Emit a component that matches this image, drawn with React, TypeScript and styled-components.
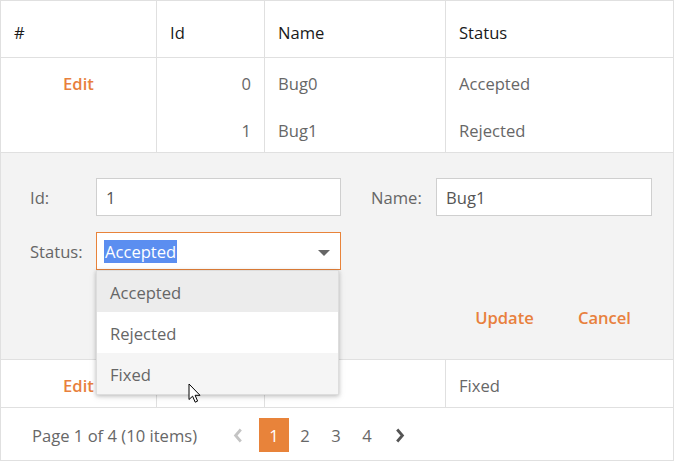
import React from "react";
import styled, { createGlobalStyle } from "styled-components";

const Global = createGlobalStyle`
  html, body { margin: 0; padding: 0; background: #fff; }
  body { font-family: "Open Sans", "Noto Sans", sans-serif; font-size: 16.6px; color: #333; }
  * { box-sizing: border-box; }
`;

const ORANGE = "#e8803d";
const BORDER = "#e0e0e0";
const FS = "16.6px";

const Frame = styled.div`
  position: relative;
  width: 674px;
  height: 461px;
  border: 1px solid ${BORDER};
  display: flex;
  flex-direction: column;
`;

const Row = styled.div<{ $h: number; $border?: boolean }>`
  display: grid;
  grid-template-columns: 156px 108px 181px 1fr;
  height: ${(p) => p.$h}px;
  border-bottom: ${(p) => (p.$border ? `1px solid ${BORDER}` : "none")};
`;

const Cell = styled.div<{ $align?: string; $last?: boolean; $head?: boolean }>`
  display: flex;
  align-items: center;
  justify-content: ${(p) => p.$align || "flex-start"};
  padding: ${(p) => (p.$head ? "6px 13px 0 13px" : "3px 13px 0 13px")};
  border-right: ${(p) => (p.$last ? "none" : `1px solid ${BORDER}`)};
  color: ${(p) => (p.$head ? "#1a1a1a" : "#676767")};
  font-size: ${FS};
  white-space: nowrap;
`;

const EditLink = styled.span`
  color: ${ORANGE};
  font-weight: 600;
`;

const FormRow = styled.div`
  height: 207px;
  background: #f3f3f3;
  border-bottom: 1px solid ${BORDER};
  padding: 25px 20px 0 29px;
  display: flex;
  flex-direction: column;
`;

const FieldGrid = styled.div`
  display: grid;
  grid-template-columns: 311px 281px;
  column-gap: 30px;
  row-gap: 16px;
`;

const Field = styled.div<{ $labelW: number }>`
  display: grid;
  grid-template-columns: ${(p) => p.$labelW}px 1fr;
  align-items: center;
  position: relative;
`;

const Label = styled.span`
  color: #666;
  font-size: ${FS};
  padding-top: 1px;
`;

const Input = styled.div<{ $focus?: boolean }>`
  height: 38px;
  background: #fff;
  border: 1px solid ${(p) => (p.$focus ? "#e8833a" : "#cfcfcf")};
  display: flex;
  align-items: center;
  padding: 1px 9px 0 9px;
  color: #555;
  font-size: ${FS};
  position: relative;
`;

const Selected = styled.span`
  background: #5b8ef0;
  color: #fff;
  margin-left: -2px;
  padding: 0 1px;
  line-height: 23px;
`;

const Caret = styled.span`
  position: absolute;
  right: 10px;
  top: 17px;
  width: 0;
  height: 0;
  border-left: 6px solid transparent;
  border-right: 6px solid transparent;
  border-top: 6px solid #666;
`;

const Buttons = styled.div`
  display: flex;
  justify-content: flex-end;
  gap: 4px;
  margin: 30px 2px 0 0;
`;

const TextButton = styled.span`
  color: ${ORANGE};
  font-weight: 600;
  font-size: ${FS};
  padding: 6px 20px;
`;

const Dropdown = styled.div`
  position: absolute;
  left: 66px;
  top: 38px;
  width: 243px;
  background: #fff;
  box-shadow: 0 1px 4px rgba(0, 0, 0, 0.22), 0 2px 8px rgba(0, 0, 0, 0.08);
  border: 1px solid #ddd;
  z-index: 5;
  display: flex;
  flex-direction: column;
`;

const Item = styled.div<{ $bg?: string }>`
  height: 41px;
  display: flex;
  align-items: center;
  padding: 2px 13px 0 13px;
  background: ${(p) => p.$bg || "#fff"};
  color: #666;
  font-size: ${FS};
`;

const Cursor = styled.svg`
  position: absolute;
  left: 158px;
  top: 151px;
  z-index: 6;
`;

const Pager = styled.div`
  flex: 1;
  display: flex;
  align-items: center;
  padding: 2px 0 0 31px;
  color: #676767;
  font-size: ${FS};
`;

const PagerInfo = styled.span`
  margin-right: 29px;
`;

const Pages = styled.div`
  display: flex;
  align-items: center;
  gap: 1px;
`;

const Nav = styled.span<{ $dim?: boolean; $side: "l" | "r" }>`
  width: 24px;
  display: flex;
  justify-content: center;
  margin: ${(p) => (p.$side === "l" ? "0 8px 0 0" : "0 0 0 5px")};
  color: ${(p) => (p.$dim ? "#c4c4c4" : "#555")};
`;

const Page = styled.span<{ $active?: boolean }>`
  width: 30px;
  height: 34px;
  display: flex;
  align-items: center;
  justify-content: center;
  padding-top: 1px;
  background: ${(p) => (p.$active ? "#e8833a" : "transparent")};
  color: ${(p) => (p.$active ? "#fff" : "#676767")};
`;

const Chevron = ({ dir }: { dir: "left" | "right" }) => (
  <svg width="10" height="15" viewBox="0 0 10 15">
    <path
      d={dir === "left" ? "M7.8 1.5 L2.6 7.5 L7.8 13.5" : "M2.2 1.5 L7.4 7.5 L2.2 13.5"}
      fill="none"
      stroke="currentColor"
      strokeWidth="2.8"
    />
  </svg>
);

export default function App() {
  return (
    <>
      <Global />
      <Frame>
        <Row $h={57} $border>
          <Cell $head>#</Cell>
          <Cell $head>Id</Cell>
          <Cell $head>Name</Cell>
          <Cell $head $last>Status</Cell>
        </Row>
        <Row $h={47}>
          <Cell $align="center"><EditLink>Edit</EditLink></Cell>
          <Cell $align="flex-end">0</Cell>
          <Cell>Bug0</Cell>
          <Cell $last>Accepted</Cell>
        </Row>
        <Row $h={48} $border>
          <Cell $align="center" />
          <Cell $align="flex-end">1</Cell>
          <Cell>Bug1</Cell>
          <Cell $last>Rejected</Cell>
        </Row>
        <FormRow>
          <FieldGrid>
            <Field $labelW={66}>
              <Label>Id:</Label>
              <Input>1</Input>
            </Field>
            <Field $labelW={65}>
              <Label>Name:</Label>
              <Input>Bug1</Input>
            </Field>
            <Field $labelW={66}>
              <Label>Status:</Label>
              <Input $focus>
                <Selected>Accepted</Selected>
                <Caret />
              </Input>
              <Dropdown>
                <Item $bg="#ececec">Accepted</Item>
                <Item>Rejected</Item>
                <Item $bg="#f5f5f5">Fixed</Item>
              </Dropdown>
              <Cursor width="14" height="22" viewBox="0 0 14 22">
                <path
                  d="M1 1 L1 16.5 L4.6 13.2 L7.2 19.2 L9.6 18.1 L7.1 12.3 L12 12.3 Z"
                  fill="#fff"
                  stroke="#000"
                  strokeWidth="1"
                  strokeLinejoin="round"
                />
              </Cursor>
            </Field>
          </FieldGrid>
          <Buttons>
            <TextButton>Update</TextButton>
            <TextButton>Cancel</TextButton>
          </Buttons>
        </FormRow>
        <Row $h={48} $border>
          <Cell $align="center"><EditLink>Edit</EditLink></Cell>
          <Cell />
          <Cell />
          <Cell $last>Fixed</Cell>
        </Row>
        <Pager>
          <PagerInfo>Page 1 of 4 (10 items)</PagerInfo>
          <Pages>
            <Nav $dim $side="l"><Chevron dir="left" /></Nav>
            <Page $active>1</Page>
            <Page>2</Page>
            <Page>3</Page>
            <Page>4</Page>
            <Nav $side="r"><Chevron dir="right" /></Nav>
          </Pages>
        </Pager>
      </Frame>
    </>
  );
}
